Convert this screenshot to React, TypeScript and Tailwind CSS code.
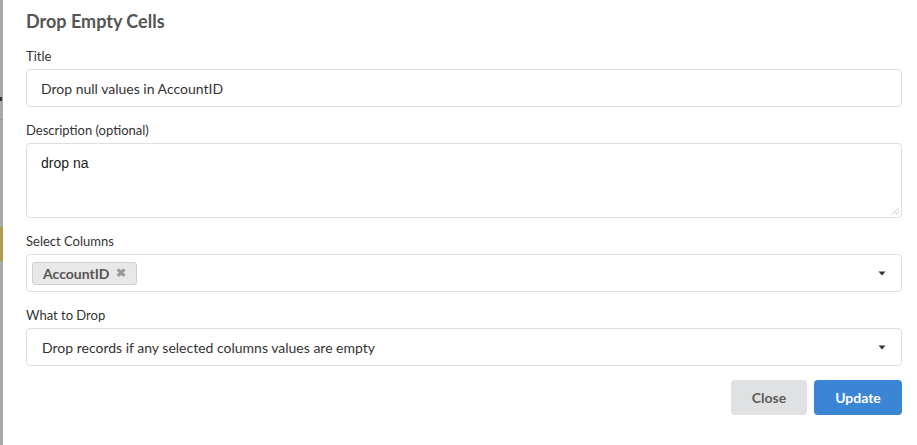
const font = { fontFamily: "Lato, 'Liberation Sans', sans-serif" };

interface FieldProps {
  label: string;
  children: React.ReactNode;
}

const Field = ({ label, children }: FieldProps) => (
  <div className="flex flex-col gap-[4px]">
    <label className="text-[13px] leading-[18px] text-[#333]">{label}</label>
    {children}
  </div>
);

// small caret used by the dropdowns
const Caret = () => (
  <svg width="8" height="5" viewBox="0 0 8 5" className="shrink-0">
    <path d="M0.5 0.5h7L4 4.5z" fill="#333" />
  </svg>
);

export default function App() {
  return (
    <div className="flex w-[917px] h-[445px] overflow-hidden bg-white" style={font}>
      {/* page behind the modal */}
      <div className="w-[3px] shrink-0 bg-[#a9a9a9] flex flex-col">
        <div className="h-[97px]" />
        <div className="h-[4px] w-[2px] bg-[#333]" />
        <div className="h-[18px]" />
        <div className="h-px bg-[#959595]" />
        <div className="h-[107px]" />
        <div className="h-[34px] bg-[#b49a4c]" />
        <div className="flex-1" />
      </div>

      {/* modal */}
      <div className="flex-1 pl-[23px] pr-[15px] pt-[9px] flex flex-col">
        <h1 className="text-[18px] leading-6 font-bold text-[#555]">Drop Empty Cells</h1>

        <div className="mt-[14px] flex flex-col gap-[14px]">
          <Field label="Title">
            <div className="h-[38px] border border-[#dedede] rounded-[4px] flex items-center px-[14px] text-[14px] text-[#333]">
              Drop null values in AccountID
            </div>
          </Field>

          <Field label="Description (optional)">
            <div className="relative h-[75px] border border-[#dedede] rounded-[4px] px-[14px] pt-[9px] text-[14px] text-[#222]" style={{ fontFamily: "'Liberation Sans', Arial, sans-serif" }}>
              drop na
              <svg width="8" height="8" viewBox="0 0 8 8" className="absolute right-[2px] bottom-[2px]">
                <path d="M7.5 1L1 7.5M7.5 4.5L4.5 7.5" stroke="#888" strokeWidth="1" strokeDasharray="1 1" />
              </svg>
            </div>
          </Field>

          <Field label="Select Columns">
            <div className="h-[38px] border border-[#dedede] rounded-[4px] flex items-center pl-[5px] pr-[15px]">
              <span className="h-[23px] flex items-center gap-[6px] px-[10px] bg-[#e8e8e8] border border-[#cfcfcf] rounded-[3px] text-[14px] font-bold text-[#555]">
                AccountID
                <span className="text-[12px] text-[#9a9a9a] leading-none">✖</span>
              </span>
              <div className="flex-1" />
              <Caret />
            </div>
          </Field>

          <Field label="What to Drop">
            <div className="h-[38px] border border-[#dedede] rounded-[4px] flex items-center pl-[15px] pr-[15px] text-[14px] text-[#333]">
              <span className="flex-1">Drop records if any selected columns values are empty</span>
              <Caret />
            </div>
          </Field>
        </div>

        <div className="mt-[14px] flex justify-end gap-[7px]">
          <button className="h-[35px] w-[76px] rounded-[4px] bg-[#e0e1e2] text-[14px] font-bold text-[#5c5c5c]">
            Close
          </button>
          <button className="h-[35px] w-[88px] rounded-[4px] bg-[#3a86d4] text-[14px] font-bold text-white">
            Update
          </button>
        </div>
      </div>
    </div>
  );
}
